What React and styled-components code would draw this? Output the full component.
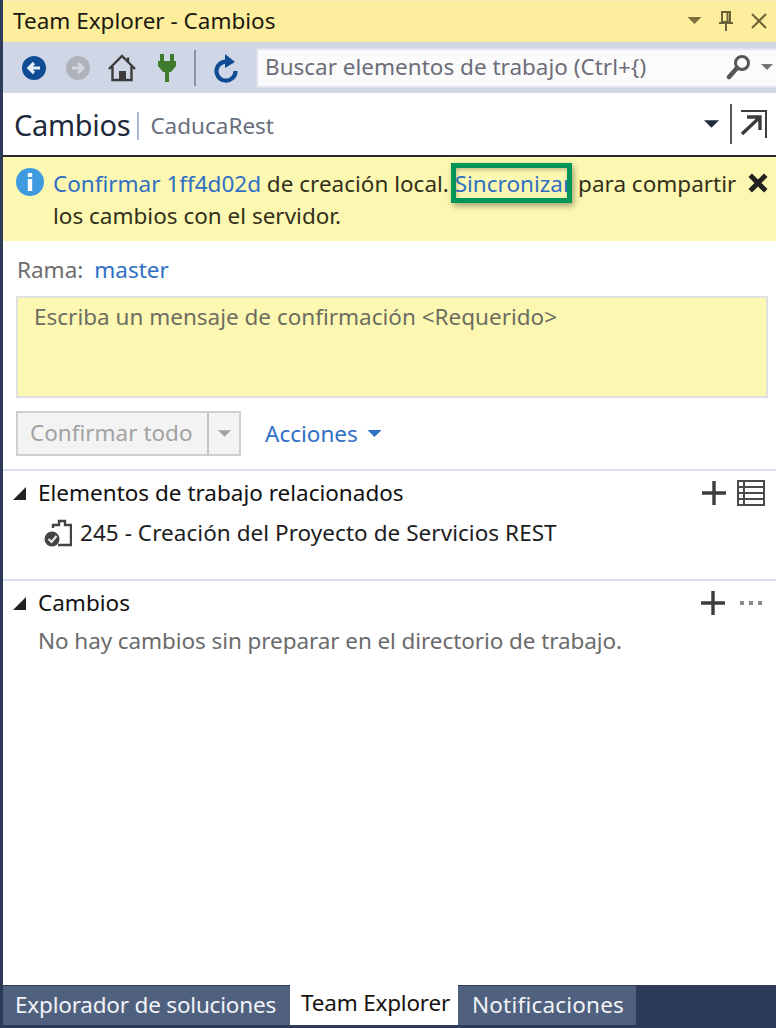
import React from "react";
import styled, { createGlobalStyle } from "styled-components";

const Global = createGlobalStyle`
  html, body, #root { margin: 0; padding: 0; height: 100%; }
  body { background: #fff; overflow: hidden; font-family: "Noto Sans", "Open Sans", sans-serif; }
`;
const Frame = styled.div`
  width: 776px; height: 1028px; box-sizing: border-box; display: flex; flex-direction: column;
  border-left: 3px solid #2d3a58; background: #fff; color: #1e1e1e;
  font-size: 22.5px; line-height: 30px; letter-spacing: 0;
`;
const TitleBar = styled.div`
  height: 42px; flex: none; display: flex; align-items: center; padding: 0 8px 2px 10px;
  background: #fdee9e; border-top: 1px solid #f4ecc0; box-sizing: border-box;
`;
const TitleText = styled.span` flex: 1; color: #1c1a10; `;
const TitleIcons = styled.div` display: flex; align-items: center; gap: 16px; `;
const Toolbar = styled.div`
  height: 51px; flex: none; display: flex; align-items: center; background: #cfd6e5; padding: 0 0 0 18px; box-sizing: border-box;
`;
const ToolIcon = styled.div` display: flex; margin: 0 ${p => p.$mr || 0}px 0 ${p => p.$ml || 0}px; `;
const Sep = styled.div` width: 2px; height: 36px; background: #8b94a5; margin: 0 17px 0 18px; `;
const Search = styled.div`
  margin-left: 17px; flex: 1; height: 40px; display: flex; align-items: center; background: #fbfbfc;
  border: 2px solid #dfe3ec; border-right: 0; box-sizing: border-box; padding: 0 3px 2px 7px; color: #6d6d78;
`;
const SearchText = styled.span` flex: 1; `;
const Header = styled.div`
  height: 64px; flex: none; display: flex; align-items: center; padding: 0 8px 0 11px; box-sizing: border-box;
  border-bottom: 2px solid #2b2b2b;
`;
const HeaderTitle = styled.span` font-size: 29px; color: #1e2a3c; letter-spacing: -0.3px; padding-top: 2px; `;
const HeaderBar = styled.span` width: 2px; height: 28px; background: #a9b9d3; margin: 3px 11px 0 7px; `;
const HeaderSub = styled.span` flex: 1; color: #68707e; margin-top: 3px; `;
const HeaderTools = styled.div` display: flex; align-items: center; `;
const VRule = styled.div` width: 2px; height: 40px; background: #555; margin: 0 8px 0 11px; `;
const Banner = styled.div`
  position: relative; height: 84px; flex: none; box-sizing: border-box; background: #fdf8b1;
  display: flex; padding: 11px 10px 0 13px; gap: 9px;
`;
const BannerText = styled.div` width: 692px; line-height: 32px; color: #33301c; `;
const Link = styled.span` color: #2f6fc4; `;
const Highlight = styled.div`
  position: absolute; left: 448px; top: 6px; width: 121px; height: 40px; box-sizing: border-box;
  border: 5px solid #009558; box-shadow: 2px 3px 6px rgba(60,60,40,.45), inset 1px 2px 4px rgba(60,60,40,.3);
`;
const Close = styled.div` position: absolute; right: 8px; top: 16px; display: flex; `;
const Branch = styled.div`
  flex: none; height: 55px; box-sizing: border-box; display: flex; align-items: center; padding: 3px 0 0 14px; color: #6c6c6c;
`;
const BranchLink = styled.span` color: #2f6fc4; margin-left: 11px; `;
const Message = styled.div`
  flex: none; height: 102px; margin: 0 8px 0 13px; box-sizing: border-box; background: #fdf8b1;
  border: 2px solid #e0e0e0; padding: 4px 16px; color: #6d6d62;
`;
const Actions = styled.div` flex: none; display: flex; align-items: center; padding: 13px 0 13px 13px; `;
const SplitBtn = styled.div`
  width: 225px; height: 45px; box-sizing: border-box; display: flex; background: #f3f3f3; border: 2px solid #cfcfcf; color: #a2a2a2;
`;
const BtnLabel = styled.div` flex: 1; padding: 5px 0 0 12px; border-right: 2px solid #c4c4c4; `;
const BtnArrow = styled.div` width: 30px; display: flex; align-items: center; justify-content: center; `;
const ActionLink = styled.div` display: flex; align-items: center; gap: 9px; margin-left: 24px; color: #2f6fc4; `;
const Section = styled.section`
  flex: none; height: ${p => p.$h}px; box-sizing: border-box; border-top: 2px solid #dcdfef; padding: 7px 11px 0 10px;
`;
const SectionHead = styled.div` display: flex; align-items: center; height: 30px; `;
const Tri = styled.div` margin-right: 12px; display: flex; `;
const SectionTitle = styled.span` flex: 1; color: #111; `;
const SectionTools = styled.div` display: flex; align-items: center; gap: ${p => p.$gap}px; padding-right: ${p => p.$pr || 0}px; `;
const WorkItem = styled.div` display: flex; align-items: center; gap: 8px; margin: 10px 0 0 31px; color: #1d1d1d; letter-spacing: 0.05px; `;
const Empty = styled.div` margin: 8px 0 0 25px; color: #6b6b6b; letter-spacing: -0.08px; `;
const Spacer = styled.div` flex: 1; `;
const Tabs = styled.div`
  flex: none; height: 43px; display: flex; align-items: flex-start; background: #2d3a58; box-sizing: border-box;
`;
const Tab = styled.div`
  box-sizing: border-box; height: ${p => p.$active ? 40 : 39}px; padding: ${p => p.$active ? "3px 0 0 11px" : `4px 0 0 ${p.$pl}px`};
  width: ${p => p.$w}px; margin-top: ${p => p.$active ? 0 : 1}px; white-space: nowrap; letter-spacing: ${p => p.$ls}px;
  background: ${p => p.$active ? "#fff" : "#50617f"}; color: ${p => p.$active ? "#16130f" : "#f1f3f7"};
`;

const Back = ({ fg = "#0f4c94", dis }) => (
  <svg width="26" height="26" viewBox="0 0 26 26">
    <circle cx="13" cy="13" r="12" fill={fg} />
    {dis
      ? <path d="M7 13h11M13 8l5 5-5 5" fill="none" stroke="#d3d7e0" strokeWidth="3" />
      : <path d="M19 13H8M13 8l-5 5 5 5" fill="none" stroke="#e8eef8" strokeWidth="3.2" />}
  </svg>
);
const Home = () => (
  <svg width="30" height="30" viewBox="0 0 30 30">
    <path d="M2 16 15 3l13 13M5.5 13.5V27h19V13.5M21 4.5v5" fill="none" stroke="#3c3c3c" strokeWidth="2.4" />
    <rect x="12" y="18" width="7" height="9" fill="#3c3c3c" />
  </svg>
);
const Plug = () => (
  <svg width="18" height="30" viewBox="0 0 18 30">
    <path d="M2 1h4v7H2zM12 1h4v7h-4zM0 8h18v5l-5 6H11v10H7V19H5l-5-6z" fill="#3f7a2d" />
  </svg>
);
const Refresh = () => (
  <svg width="26" height="30" viewBox="0 0 26 30">
    <path d="M17 9.5A9.5 9.5 0 1 0 22.5 18" fill="none" stroke="#0f4c94" strokeWidth="4.2" />
    <path d="M12 1l10 8-10 6z" fill="#0f4c94" />
  </svg>
);
const Caret = ({ c = "#555", w = 14, h = 7 }) => (
  <svg width={w} height={h} viewBox="0 0 14 7"><path d="M0 0h14L7 7z" fill={c} /></svg>
);
const Pin = () => (
  <svg width="16" height="22" viewBox="0 0 16 22">
    <path d="M4 2h8v10H4zM1 13h14M8 13v8M9.5 2v10" fill="none" stroke="#6b6237" strokeWidth="2" />
  </svg>
);
const X = ({ size = 18, c = "#6b6237", sw = 2 }) => (
  <svg width={size} height={size} viewBox="0 0 18 18">
    <path d="M2 2l14 14M16 2 2 16" stroke={c} strokeWidth={sw} fill="none" />
  </svg>
);
const Magnifier = () => (
  <svg width="26" height="28" viewBox="0 0 26 28">
    <circle cx="16" cy="10" r="6.5" fill="none" stroke="#555" strokeWidth="3" />
    <path d="M11 15 3 24" stroke="#555" strokeWidth="4.5" strokeLinecap="round" />
  </svg>
);
const Popout = () => (
  <svg width="28" height="30" viewBox="0 0 28 30">
    <path d="M1 2h25v27" fill="none" stroke="#3c3c3c" strokeWidth="2" />
    <path d="M2 25 20 8M7 8h13v13" fill="none" stroke="#3c3c3c" strokeWidth="3.4" />
  </svg>
);
const Info = () => (
  <svg width="28" height="28" viewBox="0 0 28 28">
    <circle cx="14" cy="14" r="14" fill="#3f9be0" />
    <rect x="11.8" y="5" width="4.4" height="4" fill="#fff" />
    <rect x="11.8" y="11" width="4.4" height="12" fill="#fff" />
  </svg>
);
const Triangle = () => (
  <svg width="13" height="13" viewBox="0 0 13 13"><path d="M13 0v13H0z" fill="#222" /></svg>
);
const Plus = () => (
  <svg width="24" height="24" viewBox="0 0 24 24"><path d="M12 0v24M0 12h24" stroke="#3c3c3c" strokeWidth="3.4" /></svg>
);
const ListIcon = () => (
  <svg width="28" height="26" viewBox="0 0 28 26">
    <rect x="1" y="1" width="26" height="24" fill="none" stroke="#4a4a4a" strokeWidth="2" />
    <path d="M1 7h26M1 13h26M1 19h26M7 1v24" stroke="#4a4a4a" strokeWidth="2" />
  </svg>
);
const Dots = () => (
  <svg width="22" height="5" viewBox="0 0 22 5">
    <rect x="0" y="0" width="4" height="4" fill="#8a8a8a" /><rect x="9" y="0" width="4" height="4" fill="#8a8a8a" /><rect x="18" y="0" width="4" height="4" fill="#8a8a8a" />
  </svg>
);
const ItemIcon = () => (
  <svg width="28" height="28" viewBox="0 0 28 28">
    <path d="M9 9V6h6V2h6v4h6v20H14" fill="none" stroke="#444" strokeWidth="2.4" />
    <circle cx="8" cy="20" r="7.5" fill="#444" />
    <path d="M4.5 20l3 3 5-6" fill="none" stroke="#eee" strokeWidth="2" />
  </svg>
);

export default function App() {
  return (
    <Frame>
      <Global />
      <TitleBar>
        <TitleText>Team Explorer - Cambios</TitleText>
        <TitleIcons><Caret c="#7a6f3e" w={15} h={7} /><Pin /><X /></TitleIcons>
      </TitleBar>
      <Toolbar>
        <ToolIcon $mr={18}><Back /></ToolIcon>
        <ToolIcon $mr={16}><Back fg="#aeb2bb" dis /></ToolIcon>
        <ToolIcon $mr={21}><Home /></ToolIcon>
        <ToolIcon><Plug /></ToolIcon>
        <Sep />
        <ToolIcon><Refresh /></ToolIcon>
        <Search>
          <SearchText>Buscar elementos de trabajo (Ctrl+{"{"})</SearchText>
          <Magnifier />
          <ToolIcon $ml={9}><Caret c="#777" w={12} h={6} /></ToolIcon>
        </Search>
      </Toolbar>
      <Header>
        <HeaderTitle>Cambios</HeaderTitle>
        <HeaderBar />
        <HeaderSub>CaducaRest</HeaderSub>
        <HeaderTools><Caret c="#1e2a3c" w={15} h={8} /><VRule /><Popout /></HeaderTools>
      </Header>
      <Banner>
        <Info />
        <BannerText>
          <Link>Confirmar 1ff4d02d</Link> de creación local. <Link>Sincronizar</Link> para compartir<br />los cambios con el servidor.
        </BannerText>
        <Highlight />
        <Close><X size={20} c="#222" sw={4.4} /></Close>
      </Banner>
      <Branch>Rama:<BranchLink>master</BranchLink></Branch>
      <Message>Escriba un mensaje de confirmación &lt;Requerido&gt;</Message>
      <Actions>
        <SplitBtn>
          <BtnLabel>Confirmar todo</BtnLabel>
          <BtnArrow><Caret c="#a0a0a0" w={13} h={7} /></BtnArrow>
        </SplitBtn>
        <ActionLink>Acciones <Caret c="#2f6fc4" w={15} h={7} /></ActionLink>
      </Actions>
      <Section $h={110}>
        <SectionHead>
          <Tri><Triangle /></Tri>
          <SectionTitle>Elementos de trabajo relacionados</SectionTitle>
          <SectionTools $gap={11}><Plus /><ListIcon /></SectionTools>
        </SectionHead>
        <WorkItem><ItemIcon />245 - Creación del Proyecto de Servicios REST</WorkItem>
      </Section>
      <Section $h={110}>
        <SectionHead>
          <Tri><Triangle /></Tri>
          <SectionTitle>Cambios</SectionTitle>
          <SectionTools $gap={15} $pr={3}><Plus /><Dots /></SectionTools>
        </SectionHead>
        <Empty>No hay cambios sin preparar en el directorio de trabajo.</Empty>
      </Section>
      <Spacer />
      <Tabs>
        <Tab $w={287} $ls={-0.2} $pl={12}>Explorador de soluciones</Tab>
        <Tab $w={168} $ls={-0.2} $active>Team Explorer</Tab>
        <Tab $w={178} $ls={0.2} $pl={14}>Notificaciones</Tab>
      </Tabs>
    </Frame>
  );
}
